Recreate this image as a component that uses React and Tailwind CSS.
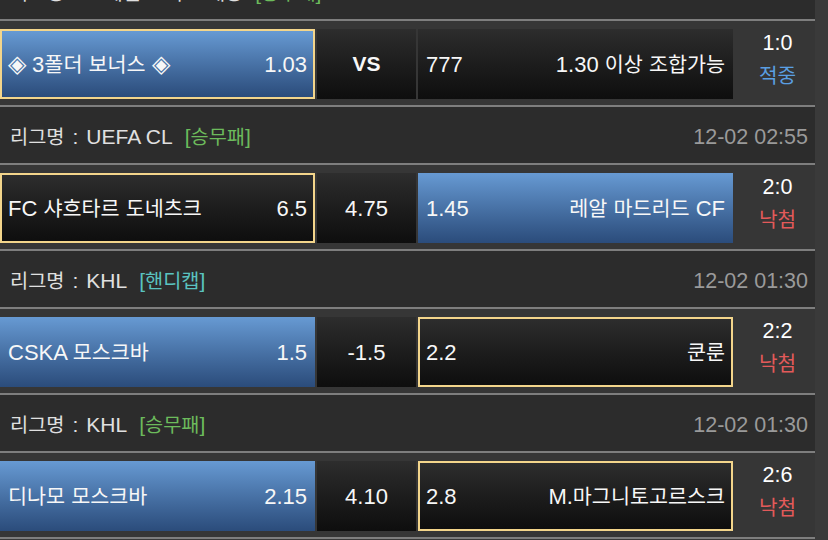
import React from "react";

const SCALE = /([\u3130-\u318F\uAC00-\uD7A3]+|\u25C8)/;

function K({ children }) {
  const parts = String(children).split(SCALE);
  return parts.map((p, i) =>
    p === "" || p === undefined ? null : p === "\u25C8" ? (
      <span key={i} className="text-[1.1em] leading-none">{p}</span>
    ) : /[\u3130-\u318F\uAC00-\uD7A3]/.test(p) ? (
      <span key={i} className="text-[0.94em]">{p}</span>
    ) : (
      <span key={i} className="whitespace-pre">{p}</span>
    )
  );
}

const GREEN = "text-[#6cbb5c]";
const TEAL = "text-[#5ac3c0]";

const rows = [
  { type: "h", league: "스페셜 보너스 배당", tag: "[승무패]", tagColor: GREEN, date: "12-02 03:00" },
  {
    type: "b",
    home: "◈ 3폴더 보너스 ◈", homeOdd: "1.03", homeBlue: true, homePick: true,
    mid: "VS", bold: true,
    awayOdd: "777", away: "1.30 이상 조합가능", awayBlue: false, awayPick: false,
    score: "1:0", result: "적중", win: true,
  },
  { type: "h", league: "UEFA CL", tag: "[승무패]", tagColor: GREEN, date: "12-02 02:55" },
  {
    type: "b",
    home: "FC 샤흐타르 도네츠크", homeOdd: "6.5", homeBlue: false, homePick: true,
    mid: "4.75",
    awayOdd: "1.45", away: "레알 마드리드 CF", awayBlue: true, awayPick: false,
    score: "2:0", result: "낙첨", win: false,
  },
  { type: "h", league: "KHL", tag: "[핸디캡]", tagColor: TEAL, date: "12-02 01:30" },
  {
    type: "b",
    home: "CSKA 모스크바", homeOdd: "1.5", homeBlue: true, homePick: false,
    mid: "-1.5",
    awayOdd: "2.2", away: "쿤룬", awayBlue: false, awayPick: true,
    score: "2:2", result: "낙첨", win: false,
  },
  { type: "h", league: "KHL", tag: "[승무패]", tagColor: GREEN, date: "12-02 01:30" },
  {
    type: "b",
    home: "디나모 모스크바", homeOdd: "2.15", homeBlue: true, homePick: false,
    mid: "4.10",
    awayOdd: "2.8", away: "M.마그니토고르스크", awayBlue: false, awayPick: true,
    score: "2:6", result: "낙첨", win: false,
  },
];

function Sep() {
  return <div className="h-[2px] bg-[#7e7e7e]" />;
}

function Header({ league, tag, tagColor, date }) {
  return (
    <div className="flex h-[56px] items-center justify-between bg-[#2c2c2c] pl-[10px] pr-[7px] pt-[4px] text-[21px]">
      <div className="flex items-baseline text-[#e0e0e0]">
        <K>리그명</K>
        <span className="mx-[8px]">:</span>
        <K>{league}</K>
        <span className={`ml-3 ${tagColor}`}>
          <K>{tag}</K>
        </span>
      </div>
      <div className="text-[21.5px] text-[#9a9a9a]">{date}</div>
    </div>
  );
}

function Cell({ blue, pick, left, right, extra }) {
  const bg = blue
    ? "bg-linear-to-b from-[#679ad3] to-[#2b4c7b]"
    : "bg-linear-to-b from-[#2d2d2d] to-[#0e0e0e]";
  const border = pick ? "border-2 border-[#f3d58b] px-[6px]" : "px-2";
  return (
    <div className={`flex h-[70px] w-[315px] items-center justify-between text-[22px] text-[#f7f7f7] ${bg} ${border} ${extra}`}>
      <span className="whitespace-nowrap">
        <K>{left}</K>
      </span>
      <span className="whitespace-nowrap">
        <K>{right}</K>
      </span>
    </div>
  );
}

function Bet(r) {
  return (
    <div className="flex h-[84px] bg-[#363636] pt-2 pb-[6px]">
      <Cell blue={r.homeBlue} pick={r.homePick} left={r.home} right={r.homeOdd} extra="" />
      <div
        className={`ml-[2px] flex h-[70px] w-[99px] items-center justify-center bg-linear-to-b from-[#2d2d2d] to-[#0e0e0e] text-[#f7f7f7] ${
          r.bold ? "text-[21px] font-bold" : "text-[22px]"
        }`}
      >
        {r.mid}
      </div>
      <Cell blue={r.awayBlue} pick={r.awayPick} left={r.awayOdd} right={r.away} extra="ml-[2px]" />
      <div className="flex h-[70px] w-[82px] flex-col items-center justify-center pb-2 pl-[7px] text-[21.5px] leading-[33px]">
        <span className="text-white">{r.score}</span>
        <span className={r.win ? "text-[#5a9fe2]" : "text-[#e35a5a]"}>
          <K>{r.result}</K>
        </span>
      </div>
    </div>
  );
}

export default function App() {
  return (
    <div className="h-[540px] w-[828px] overflow-hidden bg-[#3a3a3a] font-['Liberation_Sans','Noto_Sans_CJK_KR',sans-serif]">
      <div className="-mt-[37px] w-[815px]">
        {rows.map((r, i) => (
          <React.Fragment key={i}>
            {r.type === "h" ? <Header {...r} /> : <Bet {...r} />}
            <Sep />
          </React.Fragment>
        ))}
      </div>
    </div>
  );
}
